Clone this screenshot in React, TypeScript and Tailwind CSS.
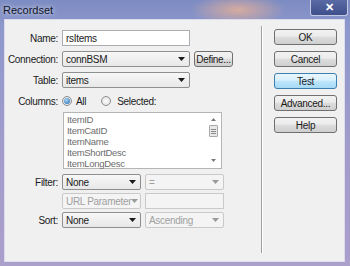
import React from 'react';

const font = "font-['Liberation_Sans',Arial,sans-serif] tracking-[-0.3px]";

const btnClass =
  'flex h-[16px] w-[63px] items-center justify-center rounded-[3px] border border-[#707070] bg-[linear-gradient(#f2f2f2_0%,#ebebeb_45%,#dddddd_50%,#cfcfcf_100%)] text-[10px] text-[#1a1a1a]';

// ---------------------------------------------------------------------------
// small controls
// ---------------------------------------------------------------------------

function Caret({ dim }: { dim?: boolean }) {
  return (
    <svg width="7" height="4" viewBox="0 0 7 4" className="shrink-0">
      <path d="M0 0h7L3.5 4z" fill={dim ? '#9a9a9a' : '#1a1a1a'} />
    </svg>
  );
}

function Select({ value, width, disabled }: { value: string; width: string; disabled?: boolean }) {
  return (
    <div
      className={
        'flex h-[16px] items-center justify-between whitespace-nowrap rounded-[2px] border pl-[3px] pr-[4px] text-[10px] ' +
        width +
        (disabled
          ? ' border-[#c9c9c9] bg-[#f4f4f4] text-[#a0a0a0]'
          : ' border-[#8e8f8f] bg-[linear-gradient(#f7f7f7,#e8e8e8)] text-[#1a1a1a]')
      }
    >
      <span>{value}</span>
      <Caret dim={disabled} />
    </div>
  );
}

function Radio({ checked }: { checked?: boolean }) {
  return (
    <span className="flex h-[10px] w-[10px] items-center justify-center rounded-full border border-[#8e8f8f] bg-[radial-gradient(circle,#ffffff,#d8d8d8)]">
      {checked && <span className="h-[6px] w-[6px] rounded-full bg-[radial-gradient(circle_at_40%_35%,#a8d8f8,#1c5ea8)]" />}
    </span>
  );
}

function Row({ label, children }: { label: string; children?: React.ReactNode }) {
  return (
    <div className="flex h-[16px] items-center">
      <span className="w-[54px] pr-[1px] text-right text-[10px] text-[#1a1a1a]">{label}</span>
      <div className="ml-[3px] flex items-center gap-[4px]">{children}</div>
    </div>
  );
}

// ---------------------------------------------------------------------------
// App
// ---------------------------------------------------------------------------

export default function App() {
  const columns = ['ItemID', 'ItemCatID', 'ItemName', 'ItemShortDesc', 'ItemLongDesc'];

  return (
    <div
      className={
        font +
        ' flex h-[266px] w-[350px] flex-col bg-[radial-gradient(ellipse_48px_16px_at_238px_10px,#d6ab9f,rgba(214,171,159,0)),linear-gradient(#7c8bc2_0%,#8d98cc_10%,#a39ccb_60%,#ab9fcc_100%)]'
      }
    >
      {/* title bar */}
      <div className="flex h-[19px] shrink-0 items-start justify-between">
        <span className="ml-[3px] mt-[4px] text-[11px] leading-[12px] tracking-normal text-[#10142a] [text-shadow:0_0_5px_rgba(255,255,255,0.9)]">
          Recordset
        </span>
        <div className="mr-[2px] flex h-[16px] w-[38px] items-center justify-center rounded-b-[3px] border border-t-0 border-[#c3c9e4] bg-[linear-gradient(#5a6aa4,#3f4f8c)]">
          <span className="text-[11px] font-bold leading-none text-white">✕</span>
        </div>
      </div>

      {/* body */}
      <div className="mx-[4px] mr-[5px] flex h-[243px] border border-[#dcdcec] bg-[#f0f0f0]">
        {/* form column */}
        <div className="flex w-[256px] flex-col pt-[10px]">
          <Row label="Name:">
            <div className="flex h-[16px] w-[128px] items-center border border-[#abadb3] bg-white pl-[3px] text-[10px] text-[#1a1a1a]">
              rsItems
            </div>
          </Row>
          <div className="mt-[5px]">
            <Row label="Connection:">
              <Select value="connBSM" width="w-[128px]" />
              <div className="flex h-[16px] w-[39px] items-center justify-center rounded-[3px] border border-[#707070] bg-[linear-gradient(#f2f2f2_0%,#ebebeb_45%,#dddddd_50%,#cfcfcf_100%)] text-[10px] text-[#1a1a1a]">
                Define...
              </div>
            </Row>
          </div>
          <div className="mt-[5px]">
            <Row label="Table:">
              <Select value="items" width="w-[128px]" />
            </Row>
          </div>
          <div className="mt-[5px]">
            <Row label="Columns:">
              <Radio checked />
              <span className="text-[10px] text-[#1a1a1a]">All</span>
              <span className="ml-[11px]">
                <Radio />
              </span>
              <span className="ml-[2px] text-[10px] text-[#1a1a1a]">Selected:</span>
            </Row>
          </div>
          <div className="ml-[58px] mt-[3px] flex h-[57px] w-[159px] border border-[#b5b5b5] bg-white">
            <div className="flex flex-1 flex-col pl-[3px] pt-[1px] text-[9.5px] leading-[11px] text-[#6d6d6d]">
              {columns.map((c) => (
                <span key={c}>{c}</span>
              ))}
            </div>
            <div className="flex w-[15px] flex-col items-center pb-[6px] pt-[5px]">
              <svg width="5" height="3" viewBox="0 0 5 3">
                <path d="M0 3L2.5 0 5 3z" fill="#7a7a7a" />
              </svg>
              <div className="mt-[4px] flex h-[12px] w-[9px] flex-col items-center justify-center gap-[1px] rounded-[1px] border border-[#a8a8a8] bg-[#e8e8e8]">
                <span className="h-px w-[5px] bg-[#8a8a8a]" />
                <span className="h-px w-[5px] bg-[#8a8a8a]" />
                <span className="h-px w-[5px] bg-[#8a8a8a]" />
              </div>
              <div className="flex-1" />
              <svg width="5" height="3" viewBox="0 0 5 3">
                <path d="M0 0h5L2.5 3z" fill="#7a7a7a" />
              </svg>
            </div>
          </div>
          <div className="mt-[5px]">
            <Row label="Filter:">
              <Select value="None" width="w-[79px]" />
              <Select value="=" width="w-[79px]" disabled />
            </Row>
          </div>
          <div className="mt-[3px]">
            <Row label="">
              <Select value="URL Parameter" width="w-[79px]" disabled />
              <div className="h-[16px] w-[79px] border border-[#c9c9c9] bg-[#f4f4f4]" />
            </Row>
          </div>
          <div className="mt-[3px]">
            <Row label="Sort:">
              <Select value="None" width="w-[79px]" />
              <Select value="Ascending" width="w-[79px]" disabled />
            </Row>
          </div>
        </div>

        {/* separator */}
        <div className="mb-[8px] mt-[6px] flex">
          <div className="w-px bg-[#a0a0a0]" />
          <div className="w-px bg-white" />
        </div>

        {/* buttons */}
        <div className="flex flex-col gap-[6px] pl-[11px] pt-[9px]">
          <div className={btnClass}>OK</div>
          <div className={btnClass}>Cancel</div>
          <div className="flex h-[16px] w-[63px] items-center justify-center rounded-[3px] border border-[#3c7fb1] bg-[linear-gradient(#eaf6fd_0%,#d9f0fc_45%,#bee6fd_50%,#a7d9f5_100%)] text-[10px] text-[#1a1a1a]">
            Test
          </div>
          <div className={btnClass}>Advanced...</div>
          <div className={btnClass}>Help</div>
        </div>
      </div>
    </div>
  );
}
